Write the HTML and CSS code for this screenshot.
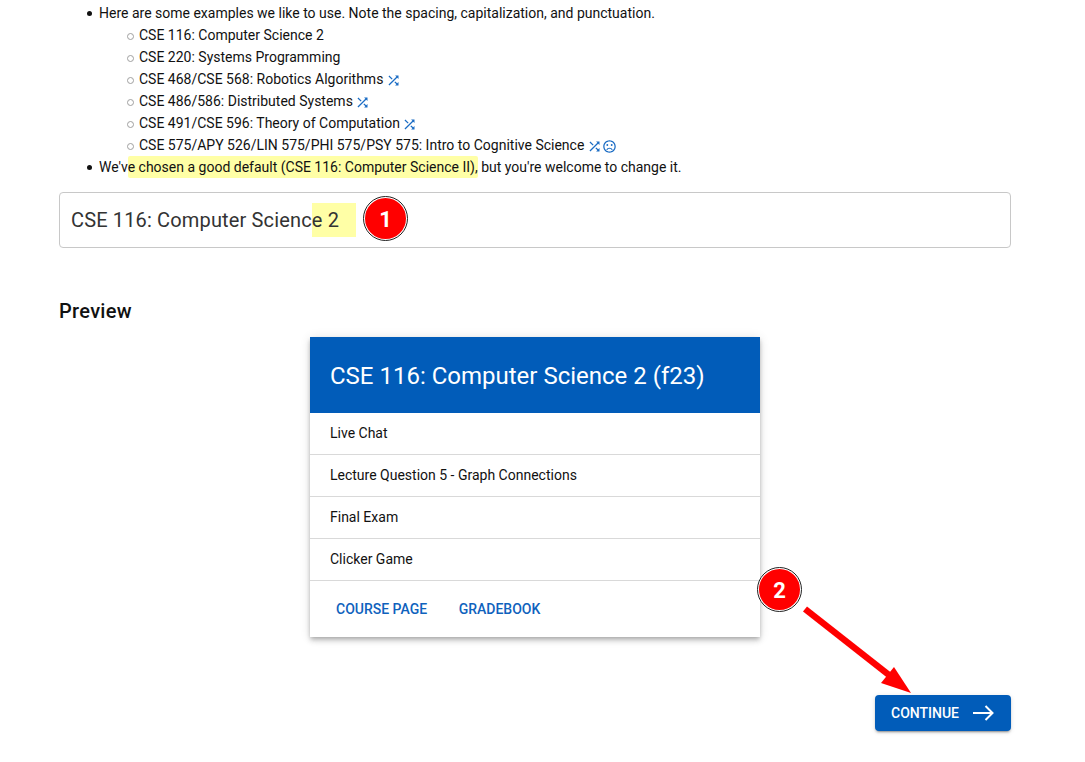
FILE: index.html
```html
<!DOCTYPE html>
<html lang="en">
<head>
<meta charset="utf-8">
<title>Course name</title>
<link rel="stylesheet" href="styles.css">
</head>
<body>
<main class="page">
  <svg width="0" height="0" class="defs" aria-hidden="true">
    <defs>
      <symbol id="shuffle" viewBox="0 0 24 24"><path d="M10.59 9.17 5.41 4 4 5.41l5.17 5.17 1.42-1.41zM14.5 4l2.04 2.04L4 18.59 5.41 20 17.96 7.46 20 9.5V4h-5.5zm.33 9.41-1.41 1.41 3.13 3.13L14.5 20H20v-5.5l-2.04 2.04-3.13-3.13z"/></symbol>
      <symbol id="sad" viewBox="0 0 24 24"><circle cx="15.5" cy="9.5" r="1.5"/><circle cx="8.5" cy="9.5" r="1.5"/><path d="M12 14c-2.33 0-4.32 1.45-5.12 3.5h1.67c.69-1.19 1.97-2 3.45-2s2.75.81 3.45 2h1.67c-.8-2.05-2.79-3.5-5.12-3.5zM11.99 2C6.47 2 2 6.48 2 12s4.47 10 9.99 10C17.52 22 22 17.52 22 12S17.52 2 11.99 2zM12 20c-4.42 0-8-3.58-8-8s3.58-8 8-8 8 3.58 8 8-3.58 8-8 8z"/></symbol>
    </defs>
  </svg>
  <ul class="outer">
    <li>Here are some examples we like to use. Note the spacing, capitalization, and punctuation.
      <ul class="inner">
        <li>CSE 116: Computer Science 2</li>
        <li>CSE 220: Systems Programming</li>
        <li>CSE 468/CSE 568: Robotics Algorithms <svg class="tag"><use href="#shuffle"/></svg></li>
        <li>CSE 486/586: Distributed Systems <svg class="tag"><use href="#shuffle"/></svg></li>
        <li>CSE 491/CSE 596: Theory of Computation <svg class="tag"><use href="#shuffle"/></svg></li>
        <li>CSE 575/APY 526/LIN 575/PHI 575/PSY 575: Intro to Cognitive Science <svg class="tag"><use href="#shuffle"/></svg><svg class="tag tag-sad"><use href="#sad"/></svg></li>
      </ul>
    </li>
    <li>We'v<span class="mark">e chosen a good default (CSE 116: Computer Science II),</span> but you're welcome to change it.</li>
  </ul>

  <div class="field">
    <span class="field-text">CSE 116: Computer Scienc<span class="field-mark">e 2</span></span>
    <span class="badge badge-one">1</span>
  </div>

  <h2 class="preview-title">Preview</h2>

  <div class="card-wrap">
    <section class="card">
      <header class="card-head">CSE 116: Computer Science 2 (f23)</header>
      <div class="row">Live Chat</div>
      <div class="row">Lecture Question 5 - Graph Connections</div>
      <div class="row">Final Exam</div>
      <div class="row">Clicker Game</div>
      <div class="actions">
        <a class="action">Course Page</a>
        <a class="action">Gradebook</a>
      </div>
      <span class="badge badge-two">2</span>
    </section>
  </div>

  <div class="footer">
    <button class="continue">Continue
      <svg class="continue-icon" viewBox="0 0 21 16" width="21" height="16"><path d="M0 8h19.5M12.5 1 19.5 8l-7 7" fill="none" stroke="#fff" stroke-width="2"/></svg>
    </button>
  </div>

  <svg class="arrow" width="120" height="100" viewBox="0 0 120 100" aria-hidden="true">
    <path d="M2 6 86 72" stroke="#f00" stroke-width="6.5" fill="none"/>
    <path d="M108 90 78 80 91 64Z" fill="#f00"/>
  </svg>
</main>
</body>
</html>
```

FILE: styles.css
```css
* { box-sizing: border-box; }
html, body { margin: 0; padding: 0; background: #fff; }
body {
  font-family: Roboto, "Liberation Sans", sans-serif;
  font-size: 14px;
  line-height: 22px;
  color: #111;
  overflow: hidden;
}
.page {
  position: relative;
  height: 762px;
  padding: 2px 74px 0 59px;
}
.defs { position: absolute; }
.outer, .inner { margin: 0; padding-left: 40px; list-style: none; }
.outer > li, .inner > li { position: relative; }
.outer > li::before,
.inner > li::before {
  content: "";
  position: absolute;
  left: -12px;
  top: 9px;
  width: 5px;
  height: 5px;
  border-radius: 50%;
}
.outer > li::before { background: #111; }
.inner > li::before { border: 1px solid #a0a0a0; }
.tag {
  width: 15px;
  height: 15px;
  fill: #1a6cc4;
  vertical-align: -4px;
  margin-left: -1px;
}
.tag-sad { margin-left: 0; }
.mark {
  background: #ffffa6;
  padding: 3px 0;
  border-radius: 2px;
}
.field {
  position: relative;
  display: flex;
  align-items: center;
  height: 56px;
  margin-top: 14px;
  padding-left: 11px;
  border: 1px solid #c8c8c8;
  border-radius: 4px;
  font-size: 20px;
  letter-spacing: .15px;
  color: #333;
}
.field-mark {
  display: inline-block;
  width: 44px;
  height: 34px;
  line-height: 34px;
  background: #ffffa6;
  margin: -6px 0;
}
.badge {
  position: absolute;
  width: 45px;
  height: 45px;
  border-radius: 50%;
  background: #f00;
  border: 2px solid #fff;
  outline: 1px solid #222;
  outline-offset: -1px;
  color: #fff;
  font-size: 22px;
  font-weight: 700;
  letter-spacing: 0;
  line-height: 43px;
  text-align: center;
}
.badge-one { left: 303px; top: 3px; }
.badge-two { left: 447px; top: 230px; }
.preview-title {
  margin: 51px 0 0;
  font-size: 20px;
  line-height: 24px;
  font-weight: 500;
  letter-spacing: .3px;
  color: #111;
}
.card-wrap {
  display: flex;
  justify-content: center;
  margin-top: 14px;
}
.card {
  position: relative;
  width: 450px;
  height: 300px;
  background: #fff;
  box-shadow: 0 2px 4px -1px rgba(0,0,0,.2), 0 4px 5px rgba(0,0,0,.14), 0 1px 10px rgba(0,0,0,.12);
}
.card-head {
  height: 76px;
  padding: 0 20px;
  background: #015cb9;
  color: #fff;
  font-size: 24px;
  line-height: 78px;
}
.row {
  height: 42px;
  padding: 0 20px;
  border-bottom: 1px solid #d9d9d9;
  line-height: 40px;
  color: #111;
}
.actions {
  display: flex;
  gap: 31.5px;
  height: 56px;
  padding-left: 26px;
  align-items: center;
}
.action {
  color: #0f62bd;
  font-weight: 500;
  text-transform: uppercase;
}
.footer {
  display: flex;
  justify-content: flex-end;
  margin-top: 58px;
}
.continue {
  display: flex;
  align-items: center;
  justify-content: space-between;
  width: 136px;
  height: 36px;
  padding: 0 17px 0 16px;
  border: 0;
  border-radius: 4px;
  background: #015cb9;
  color: #fff;
  font: 500 14px Roboto, sans-serif;
  text-transform: uppercase;
  box-shadow: 0 3px 1px -2px rgba(0,0,0,.2), 0 2px 2px rgba(0,0,0,.14), 0 1px 5px rgba(0,0,0,.12);
}
.arrow {
  position: absolute;
  left: 803px;
  top: 603px;
}
```
